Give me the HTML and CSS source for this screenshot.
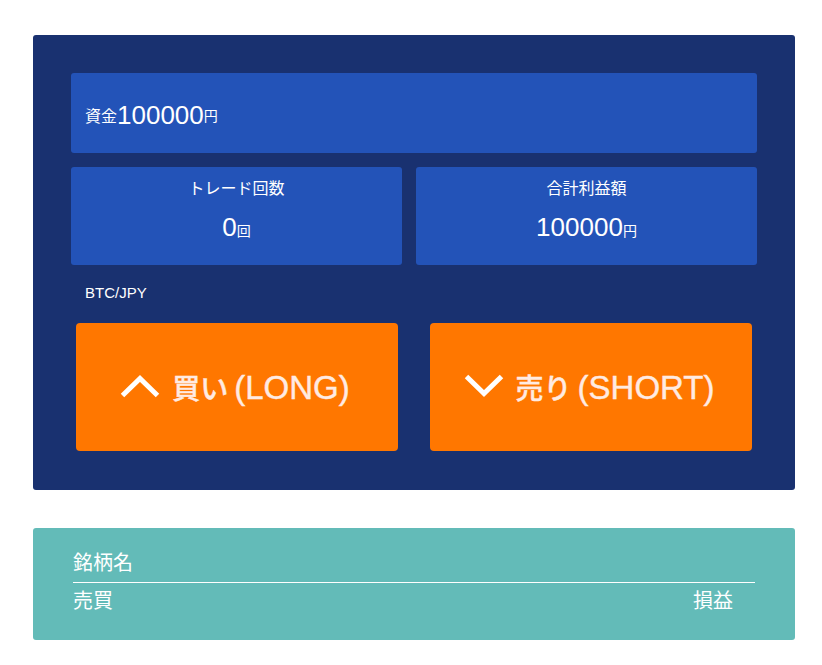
FILE: index.html
```html
<!doctype html>
<html>
<head>
<meta charset="utf-8">
<title>トレード</title>
<link rel="stylesheet" href="styles.css">
</head>
<body>
<div class="board">
    <div class="fund">
        <span class="unit-l">資金</span><span class="num">100000</span><span class="unit">円</span>
    </div>
    <div class="stats">
        <div class="stat">
            <div class="label">トレード回数</div>
            <div class="value"><span class="num">0</span><span class="unit">回</span></div>
        </div>
        <div class="stat">
            <div class="label">合計利益額</div>
            <div class="value"><span class="num">100000</span><span class="unit">円</span></div>
        </div>
    </div>
    <div class="pair">BTC/JPY</div>
    <div class="buttons">
        <button class="trade">
            <svg width="40" height="24" viewBox="0 0 40 24"><path d="M2.5 21.5 L20 4.5 L37.5 21.5" fill="none" stroke="#fff" stroke-width="5"/></svg>
            <span class="caption"><span class="jp">買い</span><span class="en">(LONG)</span></span>
        </button>
        <button class="trade">
            <svg width="40" height="24" viewBox="0 0 40 24"><path d="M2.5 2.5 L20 19.5 L37.5 2.5" fill="none" stroke="#fff" stroke-width="5"/></svg>
            <span class="caption"><span class="jp">売り</span><span class="en">(SHORT)</span></span>
        </button>
    </div>
</div>

<div class="history">
    <div class="head">銘柄名</div>
    <div class="row">
        <span>売買</span>
        <span>損益</span>
    </div>
</div>
</body>
</html>
```

FILE: styles.css
```css
body{
    margin: 0;
    padding: 35px 27px 20px 33px;
    font-family: 'Liberation Sans', Arial, 'Noto Sans CJK JP', sans-serif;
    background-color: white;
    color: white;
}
.board{
    background-color: #193170;
    border-radius: 3px;
    padding: 38px 38px 39px 38px;
}
.fund{
    background-color: #2353b8;
    border-radius: 3px;
    height: 80px;
    padding: 0 14px;
    display: flex;
    align-items: center;
    padding-top: 4px;
    box-sizing: border-box;
}
.fund .unit-l{
    font-size: 16px;
}
.num{
    font-size: 26px;
}
.unit{
    font-size: 14px;
}
.stats{
    display: grid;
    grid-template-columns: 331px 1fr;
    gap: 14px;
    margin-top: 14px;
}
.stat{
    background-color: #2353b8;
    border-radius: 3px;
    height: 98px;
    text-align: center;
    box-sizing: border-box;
    padding-top: 12px;
}
.stat .label{
    font-size: 16px;
    line-height: 20px;
}
.stat .value{
    margin-top: 13px;
    line-height: 30px;
}
.pair{
    font-size: 15px;
    padding: 19px 14px 0 14px;
    line-height: 18px;
}
.buttons{
    display: flex;
    gap: 32px;
    padding: 0 5px;
    margin-top: 21px;
}
.trade{
    flex: 1;
    height: 128px;
    border: none;
    border-radius: 4px;
    background-color: #ff7700;
    color: #ffebe2;
    font-family: 'Liberation Sans', Arial, 'Noto Sans CJK JP', sans-serif;
    display: flex;
    align-items: center;
    justify-content: center;
    gap: 12px;
    padding: 0 4px 2px 0;
}
.trade svg{
    display: block;
}
.caption{
    line-height: 40px;
    white-space: nowrap;
    margin-top: 9px;
    -webkit-text-stroke: 0.4px #ffebe2;
}
.caption .jp{
    font-family: 'Noto Sans CJK JP', sans-serif;
    font-size: 28px;
    font-weight: 500;
    margin-right: 6px;
}
.caption .en{
    font-size: 33px;
}
.history{
    margin-top: 38px;
    background-color: #63bbb8;
    border-radius: 3px;
    padding: 22px 40px 26px 40px;
    font-size: 20px;
}
.history .head{
    padding-bottom: 6px;
    border-bottom: 1px solid white;
    line-height: 26px;
}
.history .row{
    display: flex;
    justify-content: space-between;
    padding: 5px 22px 0 0;
    line-height: 26px;
}
```
